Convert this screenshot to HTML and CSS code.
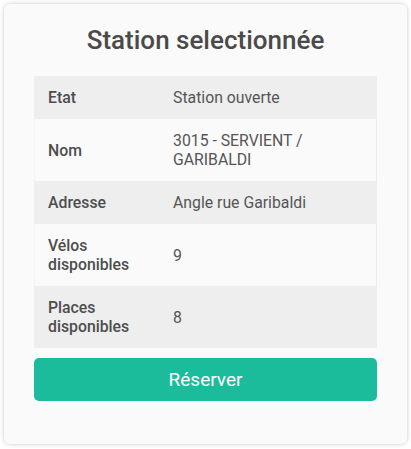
FILE: index.html
```html
<!DOCTYPE html>
<html lang="fr">
<head>
<meta charset="utf-8">
<title>Station selectionnée</title>
<link rel="stylesheet" href="styles.css">
</head>
<body>
<div class="card">
  <h2 class="title">Station selectionnée</h2>
  <table class="info">
    <tbody>
      <tr><th>Etat</th><td>Station ouverte</td></tr>
      <tr><th>Nom</th><td>3015 - SERVIENT / GARIBALDI</td></tr>
      <tr><th>Adresse</th><td>Angle rue Garibaldi</td></tr>
      <tr><th>Vélos disponibles</th><td>9</td></tr>
      <tr><th>Places disponibles</th><td>8</td></tr>
    </tbody>
  </table>
  <button class="btn" type="button">Réserver</button>
</div>
</body>
</html>
```
FILE: styles.css
```css
html, body {
  margin: 0;
  background: #ffffff;
}
body {
  padding: 4px;
  font-family: Roboto, "Liberation Sans", sans-serif;
  color: #4a4a4a;
}
.card {
  box-sizing: border-box;
  width: 403px;
  height: 440px;
  background: #fafafa;
  border-radius: 6px;
  box-shadow: 0 0 4px rgba(0, 0, 0, 0.22);
  padding: 19px 30px 0;
}
.title {
  margin: 0 0 18px;
  text-align: center;
  font-size: 26px;
  font-weight: 500;
  line-height: 35px;
  color: #4a4a4a;
}
.info {
  width: 343px;
  border-collapse: collapse;
  font-size: 15.8px;
  line-height: 19px;
}
.info th, .info td {
  padding: 12px 14px 12px;
  text-align: left;
  vertical-align: middle;
}
.info th {
  width: 97px;
  font-weight: 500;
  color: #4d4d4d;
}
.info td {
  color: #555;
}
.info tr:nth-child(odd) {
  background: #eeeeee;
}
.info tr:nth-child(even) {
  background: #fafafa;
  box-shadow: inset -1px 0 0 #ececec, inset 1px 0 0 #f3f3f3;
}
.btn {
  display: block;
  width: 343px;
  height: 43px;
  margin-top: 10px;
  border: none;
  border-radius: 5px;
  background: #1abc9c;
  color: #ffffff;
  font-family: Roboto, "Liberation Sans", sans-serif;
  font-size: 19px;
  font-weight: 400;
  cursor: pointer;
}
```
